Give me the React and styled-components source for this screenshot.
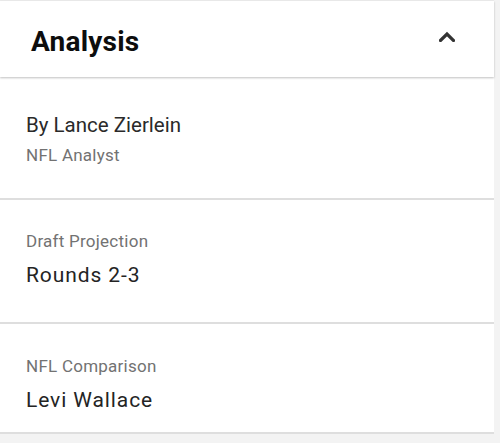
import React from "react";
import styled, { createGlobalStyle } from "styled-components";

const GlobalStyle = createGlobalStyle`
  html, body {
    margin: 0;
    padding: 0;
    background: #f3f3f3;
  }
  body {
    font-family: Roboto, "Liberation Sans", Arial, sans-serif;
    -webkit-font-smoothing: antialiased;
  }
`;

const Panel = styled.div`
  width: 494px;
  background: #fff;
  border-top: 1px solid #ececec;
`;

const Header = styled.div`
  position: relative;
  z-index: 1;
  height: 76px;
  box-sizing: border-box;
  padding: 5px 39px 0 31px;
  display: flex;
  align-items: center;
  justify-content: space-between;
  background: #fff;
  box-shadow: 0 1px 2px rgba(0, 0, 0, 0.25);
`;

const Title = styled.h2`
  margin: 0;
  font-size: 28px;
  line-height: 28px;
  font-weight: 700;
  color: #0d0d0d;
  letter-spacing: 0.2px;
`;

const Toggle = styled.button`
  border: 0;
  background: none;
  padding: 0;
  margin: 0 0 10px 0;
  display: flex;
  cursor: pointer;
`;

const Section = styled.div`
  padding: ${(p) => p.$top}px 26px ${(p) => p.$bottom}px;
  border-bottom: 2px solid #dedede;
  display: flex;
  flex-direction: column;
`;

const Author = styled.div`
  font-size: 20.5px;
  line-height: 26px;
  color: #2a2a2a;
`;

const Label = styled.div`
  margin-top: ${(p) => p.$gap || 0}px;
  font-size: 17px;
  line-height: 22px;
  color: #727272;
  letter-spacing: 0.25px;
`;

const Value = styled.div`
  margin-top: ${(p) => p.$gap}px;
  font-size: 21px;
  line-height: 28px;
  color: #242424;
  letter-spacing: 0.9px;
`;

const Chevron = () => (
  <svg width="16" height="11" viewBox="0 0 16 11">
    <polyline
      points="1.5,9.5 8,3 14.5,9.5"
      fill="none"
      stroke="#333"
      strokeWidth="3.2"
      strokeLinecap="square"
    />
  </svg>
);

export default function App() {
  return (
    <>
      <GlobalStyle />
      <Panel>
        <Header>
          <Title>Analysis</Title>
          <Toggle aria-label="Collapse">
            <Chevron />
          </Toggle>
        </Header>
        <Section $top={35} $bottom={32}>
          <Author>By Lance Zierlein</Author>
          <Label $gap={6}>NFL Analyst</Label>
        </Section>
        <Section $top={30} $bottom={33}>
          <Label>Draft Projection</Label>
          <Value $gap={9}>Rounds 2-3</Value>
        </Section>
        <Section $top={31} $bottom={18}>
          <Label>NFL Comparison</Label>
          <Value $gap={9}>Levi Wallace</Value>
        </Section>
      </Panel>
    </>
  );
}
